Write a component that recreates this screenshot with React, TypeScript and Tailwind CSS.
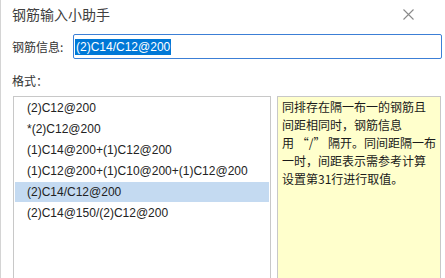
import React from 'react';

const formats = [
  '(2)C12@200',
  '*(2)C12@200',
  '(1)C14@200+(1)C12@200',
  '(1)C12@200+(1)C10@200+(1)C12@200',
  '(2)C14/C12@200',
  '(2)C14@150/(2)C12@200',
];

const latin = { fontFamily: '"Liberation Sans", "Noto Sans CJK SC", sans-serif' };
const cjk = { fontFamily: '"Noto Sans CJK SC", "Liberation Sans", sans-serif' };

const App: React.FC = () => {
  const selected = 4;

  return (
    <div
      className="w-[445px] h-[278px] bg-white border-l border-[#d4d4d4] overflow-hidden flex flex-col text-[#333]"
      style={latin}
    >
      {/* title bar */}
      <div className="h-[28px] flex items-center justify-between pl-[11px] pr-[31px]">
        <span className="text-[14px] text-[#404040]" style={cjk}>钢筋输入小助手</span>
        <svg width="11" height="11" viewBox="0 0 11 11" className="mt-[1px]">
          <path d="M0.5 0.5 L10.5 10.5 M10.5 0.5 L0.5 10.5" stroke="#8a8a8a" strokeWidth="1.1" />
        </svg>
      </div>

      {/* input row */}
      <div className="mt-[6px] flex items-center pl-[11px] pr-[3px]">
        <span className="w-[61px] text-[12px] text-[#333]" style={cjk}>钢筋信息:</span>
        <div className="flex-1 h-[25px] border border-[#3c7fd6] rounded-[2px] flex items-center pl-[1px]">
          <span className="bg-[#0078d7] text-white text-[12px] leading-[16px] px-[1px]">(2)C14/C12@200</span>
        </div>
      </div>

      <div className="mt-[13px] pl-[11px] h-[18px] flex items-center text-[12px] text-[#333]" style={cjk}>
        格式：
      </div>

      {/* list + help */}
      <div className="mt-[6px] flex flex-1 pl-[12px] pr-[4px] gap-[6px]">
        <div className="w-[258px] border border-[#c8c8c8] border-b-0">
          {formats.map((f, i) => (
            <div
              key={f}
              className={`h-[20px] my-[1px] mx-[1px] flex items-center pl-[12px] text-[12px] text-[#222] ${
                i === selected ? 'bg-[#c4daf1]' : ''
              }`}
            >
              {f}
            </div>
          ))}
        </div>
        <div
          className="flex-1 bg-[#ffffcc] border border-[#c8c8c8] border-b-0 pl-[4px] pt-[1px] text-[12px] leading-[18px] text-[#1a1a1a]"
          style={cjk}
        >
          同排存在隔一布一的钢筋且
          <br />
          间距相同时，钢筋信息
          <br />
          用 “/” 隔开。同间距隔一布
          <br />
          一时，间距表示需参考计算
          <br />
          设置第31行进行取值。
        </div>
      </div>
    </div>
  );
};

export default App;
